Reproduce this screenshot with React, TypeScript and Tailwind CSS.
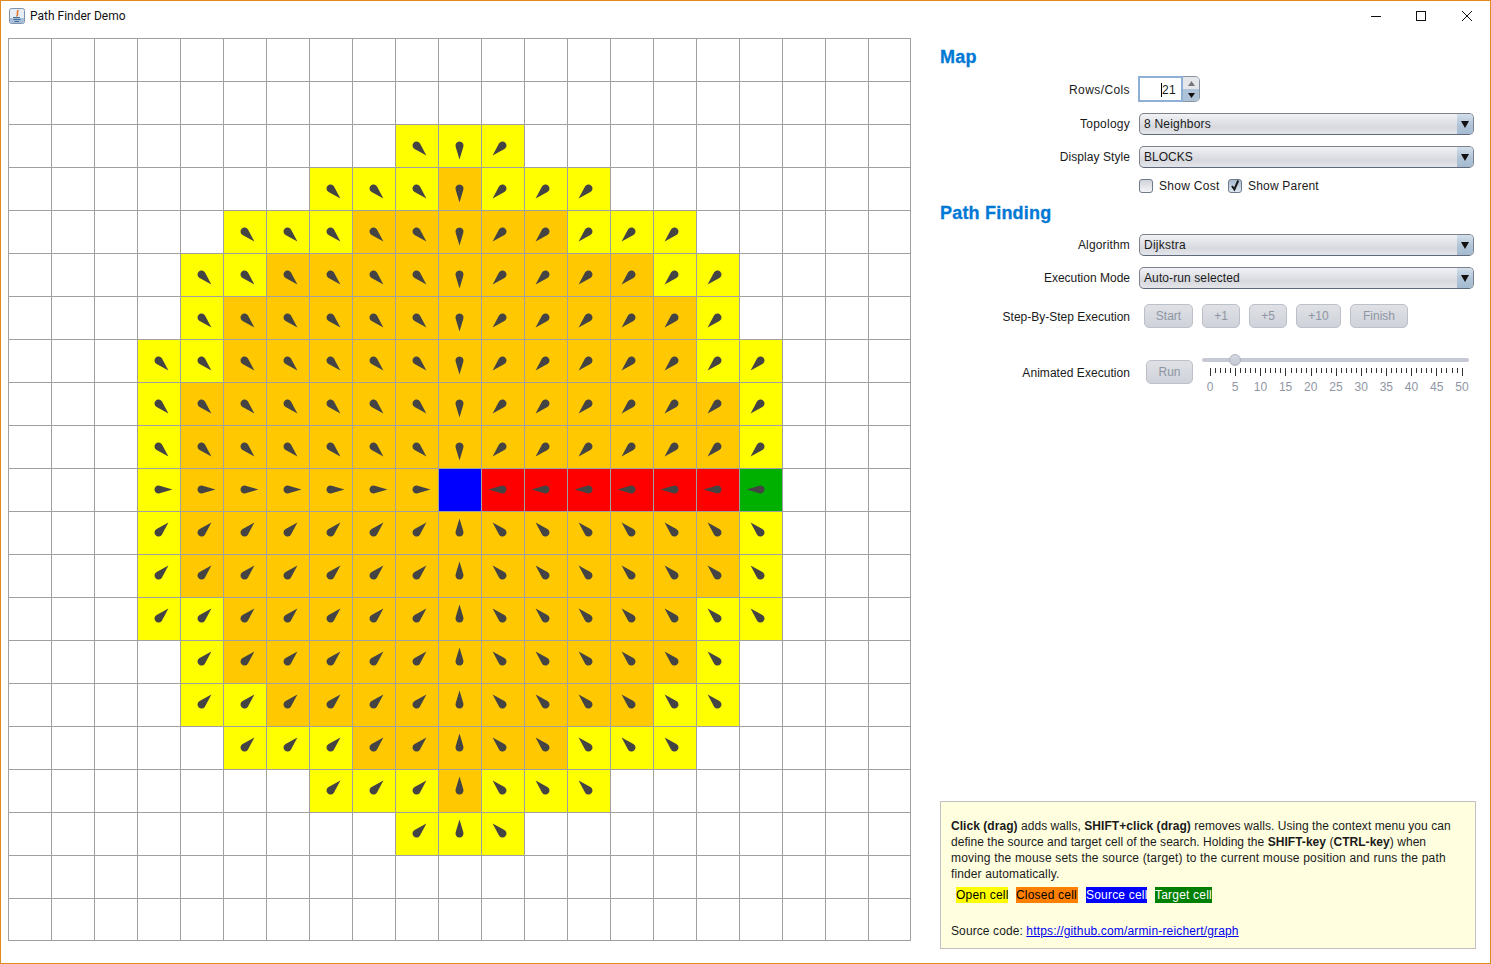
import React from "react";

const N = 21;
const SRC = { r: 10, c: 10 };

function cellColor(r: number, c: number): string {
  if (r === 10 && c === 10) return "bg-[#0000ff]";
  if (r === 10 && c === 17) return "bg-[#00b000]";
  if (r === 10 && c > 10 && c < 17) return "bg-[#ff0000]";
  const closed: Record<number, [number, number]> = {
    3: [10, 10], 4: [8, 12], 5: [6, 14], 6: [5, 15], 7: [5, 15], 8: [4, 16], 9: [4, 16], 10: [4, 16],
    11: [4, 16], 12: [4, 16], 13: [5, 15], 14: [5, 15], 15: [6, 14], 16: [8, 12], 17: [10, 10],
  };
  const open: Record<number, [number, number]> = {
    2: [9, 11], 3: [7, 13], 4: [5, 15], 5: [4, 16], 6: [4, 16], 7: [3, 17], 8: [3, 17], 9: [3, 17], 10: [3, 17],
    11: [3, 17], 12: [3, 17], 13: [3, 17], 14: [4, 16], 15: [4, 16], 16: [5, 15], 17: [7, 13], 18: [9, 11],
  };
  const cl = closed[r];
  if (cl && c >= cl[0] && c <= cl[1]) return "bg-[#ffc800]";
  const op = open[r];
  if (op && c >= op[0] && c <= op[1]) return "bg-[#ffff00]";
  return "bg-white";
}

function Drop({ r, c }: { r: number; c: number }) {
  const angle = (Math.atan2(Math.sign(SRC.r - r), Math.sign(SRC.c - c)) * 180) / Math.PI;
  return (
    <svg width="42" height="42" viewBox="-20.5 -20.5 42 42" className="block">
      <path transform={`rotate(${angle})`} d="M14 0 L1.14 -3.83 A4 4 0 1 0 1.14 3.83 Z" fill="#444444" />
    </svg>
  );
}

function Grid() {
  const cells: React.ReactNode[] = [];
  for (let r = 0; r < N; r++) {
    for (let c = 0; c < N; c++) {
      const color = cellColor(r, c);
      const hasArrow = color !== "bg-white" && color !== "bg-[#0000ff]";
      cells.push(
        <div key={`${r}-${c}`} className={`min-w-0 min-h-0 border-r border-b border-[#a0a0a0] ${color}`}>
          {hasArrow && <Drop r={r} c={c} />}
        </div>
      );
    }
  }
  return (
    <div className="grid grid-cols-[repeat(20,43px)_42px] grid-rows-[repeat(20,43px)_42px] w-[903px] h-[903px] border-l border-t border-[#a0a0a0] shrink-0">
      {cells}
    </div>
  );
}

function Combo({ value, spacing }: { value: string; spacing?: string }) {
  return (
    <div className="h-[22px] flex items-center rounded-[5px] border border-[#7e828c] border-b-[#5f6878] bg-gradient-to-b from-[#f1f2f4] via-[#d7d9df] via-65% to-[#e3e5e9] pl-[4px] pr-0 text-[12px] text-[#1a1a1a] overflow-hidden">
      <span className={`flex-1 ${spacing ?? ""}`}>{value}</span>
      <span className="w-[16px] h-full flex items-center justify-center bg-gradient-to-b from-[#d3dfea] via-[#b3c6d9] to-[#a3bad0]">
        <svg width="8" height="7" viewBox="0 0 8 7"><path d="M0 0H8L4 7Z" fill="#111111" /></svg>
      </span>
    </div>
  );
}

function Row({ label, children, className, spacing }: { label: string; children: React.ReactNode; className?: string; spacing?: string }) {
  return (
    <div className={`flex items-center ${className ?? ""}`}>
      <div className={`w-[190px] text-right text-[12px] text-[#1a1a1a] shrink-0 ${spacing ?? ""}`}>{label}</div>
      <div className="ml-[9px] flex-1 mr-[2px]">{children}</div>
    </div>
  );
}

function Btn({ label, w }: { label: string; w: string }) {
  return (
    <div className={`${w} h-[24px] flex items-center justify-center rounded-[5px] border border-[#bcc0c8] bg-gradient-to-b from-[#dfe1e6] to-[#cfd2da] text-[12px] text-[#8f96a3] shrink-0`}>
      {label}
    </div>
  );
}

function Check({ checked }: { checked?: boolean }) {
  return (
    <span className={`w-[14px] h-[14px] rounded-[3px] border border-[#6f7a8b] bg-gradient-to-b ${checked ? "from-[#a9bcd2] to-[#dfe7ef]" : "from-[#cfd2d9] to-[#f4f5f7]"} flex items-center justify-center shrink-0`}>
      {checked && (
        <svg width="12" height="12" viewBox="0 0 12 12" className="overflow-visible">
          <path d="M3 6 L5.4 9.5 L9.2 0.5" fill="none" stroke="#1a1a1a" strokeWidth="2" />
        </svg>
      )}
    </span>
  );
}

function Slider() {
  const ticks = Array.from({ length: 51 }, (_, i) => i);
  const labels = [0, 5, 10, 15, 20, 25, 30, 35, 40, 45, 50];
  return (
    <div className="w-[267px] ml-[9px] mt-[-3px]">
      <div className="relative h-[4px] rounded-full bg-[#c6c9d3]">
        <div className="absolute left-[27px] top-[-4px] w-[12px] h-[12px] rounded-full border border-[#b0b4bf] bg-gradient-to-b from-[#d6d9e1] to-[#c2c7d3]" />
      </div>
      <div className="ml-[8px] mt-[6px] w-[253px] flex justify-between items-start h-[8px]">
        {ticks.map((t) => (
          <div key={t} className={`w-px bg-[#333333] ${t % 5 === 0 ? "h-[8px]" : "h-[5px]"}`} />
        ))}
      </div>
      <div className="ml-[8px] mt-[4px] w-[252px] flex justify-between text-[12px] leading-[14px] text-[#8f96a3]">
        {labels.map((l) => (
          <span key={l} className="w-0 flex justify-center">{l}</span>
        ))}
      </div>
    </div>
  );
}

function Help() {
  return (
    <div className="h-[148px] border border-[#c0c0c0] bg-[#ffffe0] pl-[10px] pt-[16px] text-[12px] leading-[16px] text-[#1a1a1a]">
      <p className="whitespace-nowrap tracking-[0.05px]">
        <b>Click (drag)</b> adds walls, <b>SHIFT+click (drag)</b> removes walls. Using the context menu you can
      </p>
      <p className="whitespace-nowrap tracking-[0.04px]">
        define the source and target cell of the search. Holding the <b>SHIFT-key</b> (<b>CTRL-key</b>) when
      </p>
      <p className="whitespace-nowrap tracking-[0.17px]">
        moving the mouse sets the source (target) to the current mouse position and runs the path
      </p>
      <p className="whitespace-nowrap tracking-[0.12px]">finder automatically.</p>
      <div className="flex gap-[8px] ml-[5px] mt-[5px] leading-[16px] tracking-[0.2px]">
        <span className="bg-[#ffff00] text-black h-[16px] w-[52px] whitespace-nowrap">Open cell</span>
        <span className="bg-[#ff8000] text-black h-[16px] w-[62px] whitespace-nowrap">Closed cell</span>
        <span className="bg-[#0000ff] text-white h-[16px] w-[61px] whitespace-nowrap">Source cell</span>
        <span className="bg-[#008000] text-white h-[16px] w-[57px] whitespace-nowrap">Target cell</span>
      </div>
      <p className="mt-[20px] tracking-[0.1px]">
        Source code: <span className="text-[#0000ee] underline tracking-[0.16px]">https://github.com/armin-reichert/graph</span>
      </p>
    </div>
  );
}

export default function App() {
  return (
    <div className="w-[1491px] h-[964px] border border-[#e08a1e] bg-white flex flex-col overflow-hidden" style={{ fontFamily: '"Liberation Sans", Arial, sans-serif' }}>
      <div className="h-[29px] flex items-center shrink-0">
        <svg width="16" height="16" viewBox="0 0 16 16" className="ml-[8px]">
          <rect x="0.5" y="0.5" width="15" height="15" rx="2" fill="#e6edf5" stroke="#7d93ad" />
          <rect x="1" y="10" width="14" height="5" fill="#a9bfd8" />
          <path d="M9.5 2 C6.5 4.5 10.5 6 7.5 8.5" fill="none" stroke="#e2762a" strokeWidth="1.6" />
          <path d="M4 9.5 H11 M4.5 11.5 H11.5 M5.5 13.5 H10" stroke="#3f6b9b" strokeWidth="1" />
        </svg>
        <span className="ml-[5px] mt-[1px] text-[12px] text-[#111111]" style={{ fontFamily: 'Roboto, sans-serif' }}>Path Finder Demo</span>
        <div className="ml-auto flex items-center">
          <svg width="46" height="14" viewBox="0 0 46 14"><path d="M19 7.5H29" stroke="#111" /></svg>
          <svg width="46" height="14" viewBox="0 0 46 14"><rect x="18.5" y="2.5" width="9" height="9" fill="none" stroke="#111" /></svg>
          <svg width="46" height="14" viewBox="0 0 46 14"><path d="M18 2L28 12M28 2L18 12" stroke="#111" /></svg>
        </div>
      </div>
      <div className="flex flex-1 pl-[7px] pt-[8px]">
        <Grid />
        <div className="ml-[29px] w-[536px] h-[911px] flex flex-col">
          <h2 className="text-[18px] leading-[20px] font-bold text-[#0078d4] mt-[9px] tracking-[0.2px] [-webkit-text-stroke:0.3px_#0078d4]">Map</h2>
          <Row label="Rows/Cols" className="mt-[9px] [&>div:first-child]:pt-[1px]" spacing="tracking-[0.4px]">
            <div className="flex h-[26px] -ml-[1px]">
              <div className="w-[45px] border-2 border-[#8fb0d6] flex items-center justify-end pr-[5px] pt-[1px] text-[12px] text-[#1a1a1a]">
                <span className="border-l border-black leading-[14px] tracking-[0.3px]">21</span>
              </div>
              <div className="w-[17px] flex flex-col rounded-r-[5px] border border-[#8a93a3] border-l-0 overflow-hidden">
                <div className="h-1/2 flex items-center justify-center bg-[#e4e6ea]">
                  <svg width="7" height="5" viewBox="0 0 7 5"><path d="M3.5 0L7 5H0Z" fill="#777" /></svg>
                </div>
                <div className="h-1/2 flex items-center justify-center bg-[#aec2d8]">
                  <svg width="7" height="5" viewBox="0 0 7 5"><path d="M0 0H7L3.5 5Z" fill="#111" /></svg>
                </div>
              </div>
            </div>
          </Row>
          <Row label="Topology" className="mt-[11px]" spacing="tracking-[0.25px]"><Combo value="8 Neighbors" spacing="tracking-[0.2px]" /></Row>
          <Row label="Display Style" className="mt-[11px]" spacing="tracking-[0.06px]"><Combo value="BLOCKS" /></Row>
          <Row label="" className="mt-[9px]">
            <div className="flex items-center text-[12px] text-[#1a1a1a]">
              <Check />
              <span className="ml-[6px] w-[63px] tracking-[0.3px] whitespace-nowrap">Show Cost</span>
              <span className="ml-[6px]"><Check checked /></span>
              <span className="ml-[6px] tracking-[0.2px]">Show Parent</span>
            </div>
          </Row>
          <h2 className="text-[18px] leading-[20px] font-bold text-[#0078d4] mt-[8px] tracking-[0.2px] [-webkit-text-stroke:0.3px_#0078d4]">Path Finding</h2>
          <Row label="Algorithm" className="mt-[11px]" spacing="tracking-[0.15px]"><Combo value="Dijkstra" spacing="tracking-[0.25px]" /></Row>
          <Row label="Execution Mode" className="mt-[11px]"><Combo value="Auto-run selected" spacing="tracking-[0.1px]" /></Row>
          <Row label="Step-By-Step Execution" className="mt-[15px] [&>div:first-child]:pt-[1px]">
            <div className="flex gap-[9px] ml-[5px]">
              <Btn label="Start" w="w-[49px]" />
              <Btn label="+1" w="w-[38px]" />
              <Btn label="+5" w="w-[38px]" />
              <Btn label="+10" w="w-[45px]" />
              <Btn label="Finish" w="w-[58px]" />
            </div>
          </Row>
          <div className="flex mt-[32px]">
            <div className="w-[190px] pt-[4px] text-right text-[12px] text-[#1a1a1a] shrink-0 tracking-[0.05px]">Animated Execution</div>
            <div className="flex ml-[16px]">
              <Btn label="Run" w="w-[47px]" />
              <div className="mt-[1px]"><Slider /></div>
            </div>
          </div>
          <div className="mt-auto"><Help /></div>
        </div>
      </div>
    </div>
  );
}
